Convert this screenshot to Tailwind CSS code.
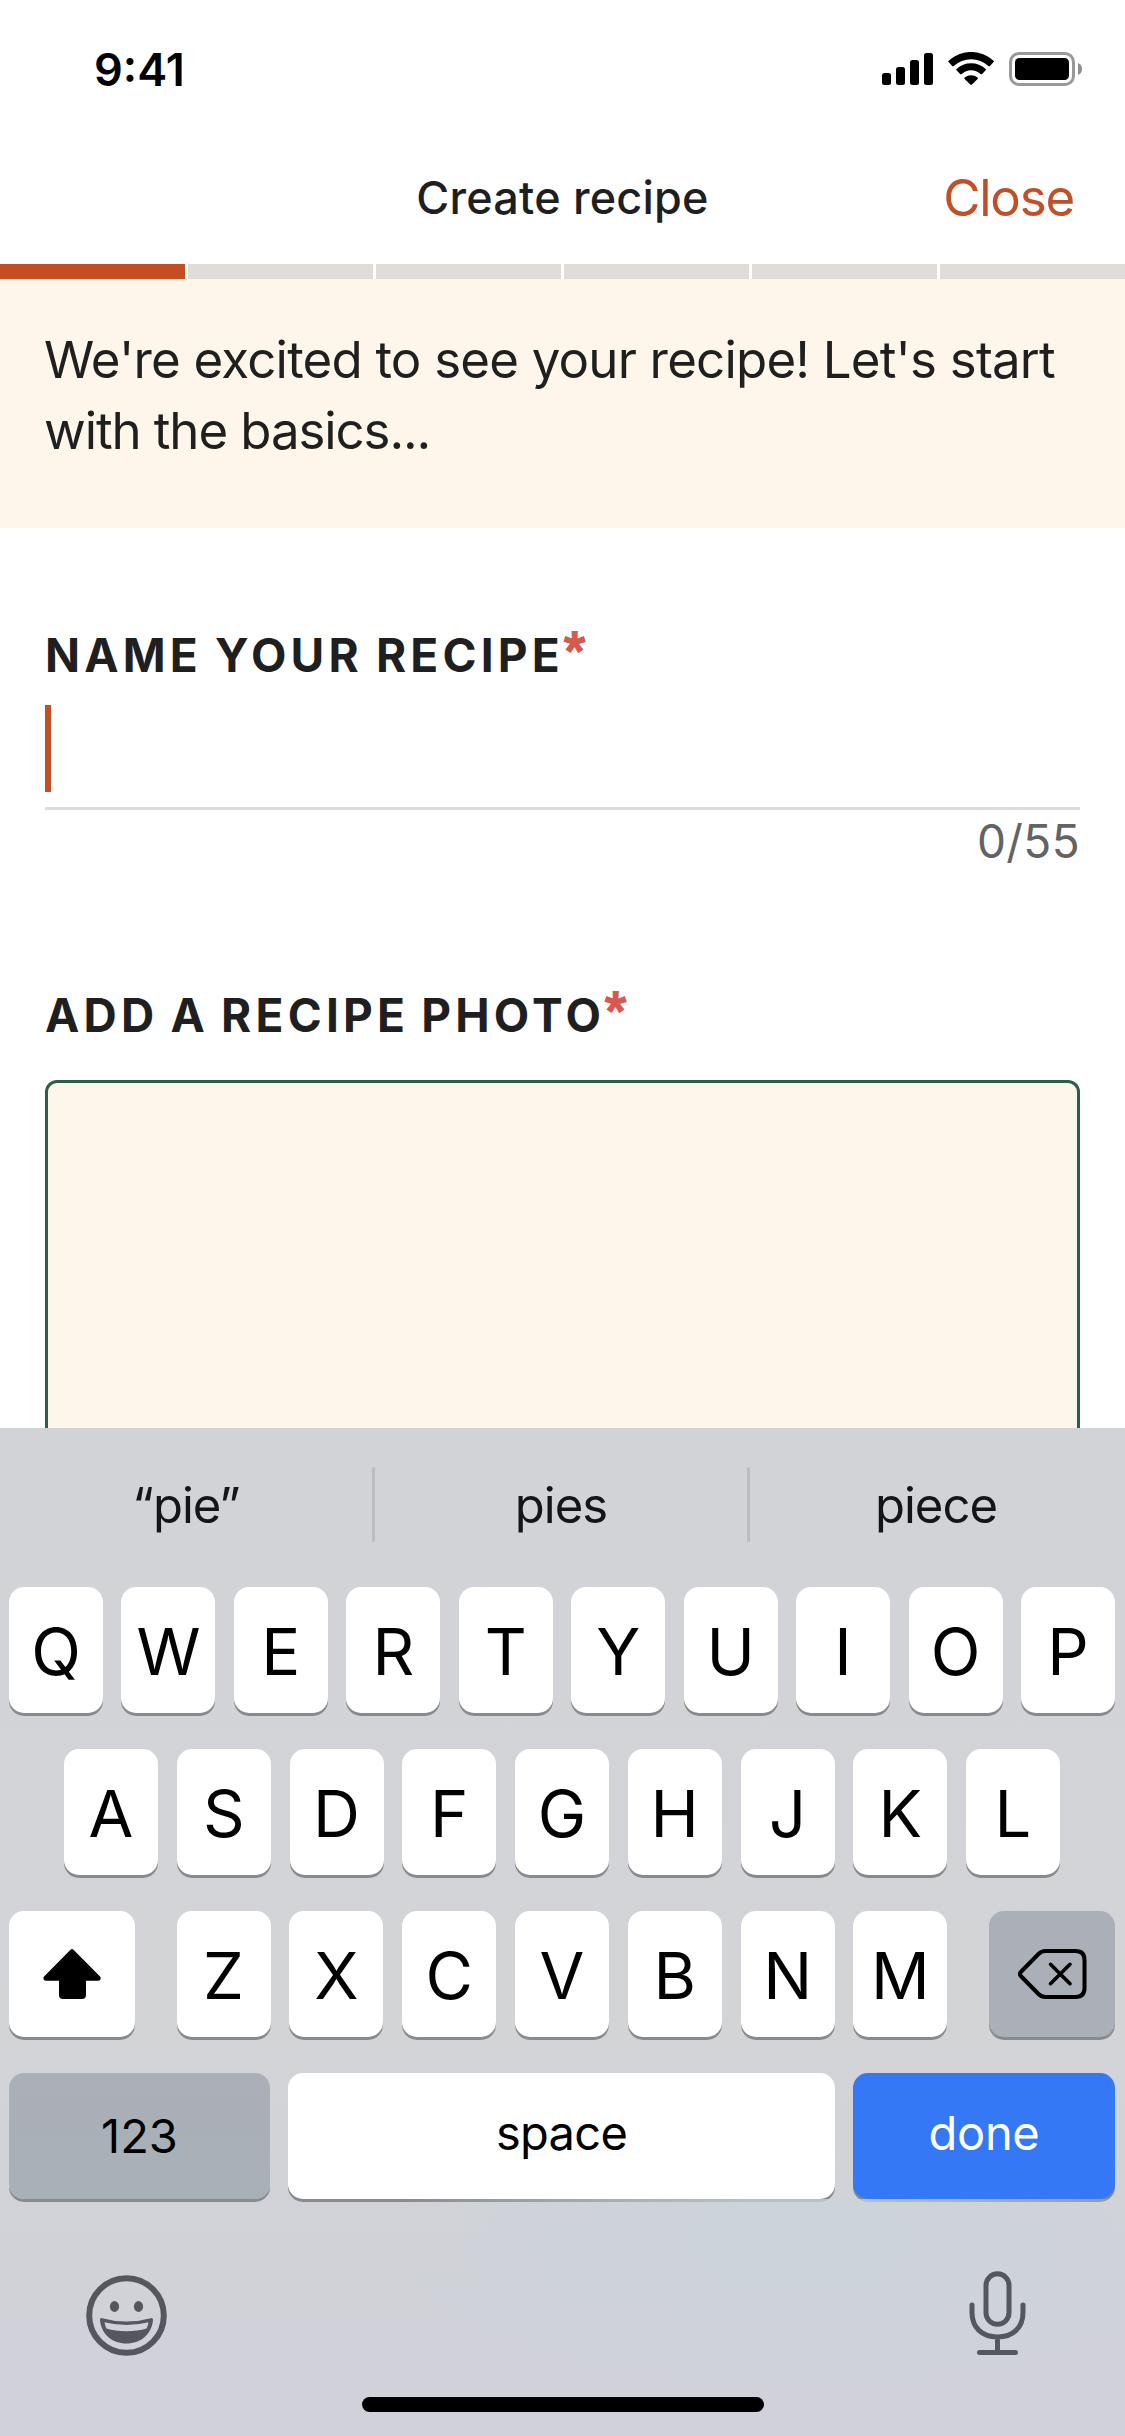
<!DOCTYPE html>
<html lang="en">
<head>
<meta charset="utf-8">
<title>Create recipe</title>
<script src="https://cdn.jsdelivr.net/npm/@tailwindcss/browser@4"></script>
</head>
<body class="bg-white">
<div class="flex h-[2436px] w-[1125px] flex-col overflow-hidden bg-white font-['Inter',sans-serif] text-[#1f1f1f]">
  <!-- Status bar -->
  <div class="flex h-[138px] shrink-0 items-center justify-between pr-[43px] pl-[94px]">
    <span class="text-[45px] leading-none font-semibold text-black">9:41</span>
    <svg class="h-[34px] w-[200px]" viewBox="882 52 200 34">
      <rect x="882" y="73" width="9" height="12" rx="2.5"/><rect x="896" y="67" width="9" height="18" rx="2.5"/><rect x="910" y="60" width="9" height="25" rx="2.5"/><rect x="924" y="53" width="9" height="32" rx="2.5"/>
      <path d="M948.600 60.800a33 33 0 0 1 45 0q.6.7 0 1.300l-3.600 3.800q-.8.7-1.600 0a25.500 25.500 0 0 0-34.600 0q-.8.7-1.600 0l-3.600-3.800q-.6-.6 0-1.300z"/>
      <path d="M956.500 69a21.500 21.500 0 0 1 29.200 0q.6.7 0 1.300l-3.600 3.700q-.8.7-1.600 0a13.500 13.500 0 0 0-18.800 0q-.8.7-1.600 0l-3.600-3.700q-.6-.6 0-1.300z"/>
      <path d="M964.600 77.500a10.500 10.500 0 0 1 13 0q.7.7 0 1.400l-5.700 5.700q-.8.7-1.600 0l-5.700-5.700q-.7-.7 0-1.400z"/>
      <rect x="1010.500" y="53.500" width="63" height="31" rx="8.500" fill="none" stroke="#999" stroke-width="3"/>
      <rect x="1015" y="58" width="54" height="22" rx="4.500"/>
      <path d="M1078 63q4 1.500 4 6t-4 6z" fill="#8e8e8e"/>
    </svg>
  </div>
  <!-- Navigation bar -->
  <div class="grid h-[126px] shrink-0 grid-cols-3 items-start pt-[30px] pr-[51px] pl-[51px]">
    <span></span>
    <h1 class="justify-self-center text-[45px] leading-[60px] font-medium tracking-[0.2px] whitespace-nowrap">Create recipe</h1>
    <span class="justify-self-end text-[51px] leading-[60px] tracking-[-1.2px] text-[#c14f27]">Close</span>
  </div>
  <!-- Step progress -->
  <div class="flex h-[15px] shrink-0 gap-[3px]">
    <div class="flex-1 bg-[#c44d24]"></div><div class="flex-1 bg-[#e0ddd8]"></div><div class="flex-1 bg-[#e0ddd8]"></div><div class="flex-1 bg-[#e0ddd8]"></div><div class="flex-1 bg-[#e0ddd8]"></div><div class="flex-1 bg-[#e0ddd8]"></div>
  </div>
  <p class="h-[249px] shrink-0 bg-[#fef6ea] pt-[45px] pl-[44px] text-[51px] leading-[71px] tracking-[-0.8px] whitespace-nowrap">We're excited to see your recipe! Let's start<br><span class="tracking-[-1.1px]">with the basics...</span></p>
  <!-- Form -->
  <div class="flex h-[900px] shrink-0 flex-col overflow-hidden px-[45px] pt-[97px]">
    <h2 class="flex h-[60px] shrink-0 text-[46px] leading-[60px] font-bold tracking-[4.2px] whitespace-nowrap [word-spacing:-2px]">NAME YOUR RECIPE<span class="-mt-1.5 font-['Roboto'] text-[#d5594f] [-webkit-text-stroke:1.8px_#d5594f]">*</span></h2>
    <div class="mt-5 h-[105px] shrink-0 border-b-[3px] border-[#dcdcdc]"><div class="h-[87px] w-[6px] bg-[#c14f27]"></div></div>
    <div class="flex h-[64px] shrink-0 justify-end text-[46px] leading-[62px] tracking-[0.4px] text-[#636363]">0/55</div>
    <h2 class="mt-[111px] flex h-[60px] shrink-0 text-[46px] leading-[60px] font-bold tracking-[4.2px] whitespace-nowrap [word-spacing:-3px]">ADD A RECIPE PHOTO<span class="-mt-1.5 font-['Roboto'] text-[#d5594f] [-webkit-text-stroke:1.8px_#d5594f]">*</span></h2>
    <div class="mt-[35px] h-[600px] shrink-0 rounded-[12px] border-[3px] border-[#2f5d4b] bg-[#fef6ea]"></div>
  </div>
  <!-- Keyboard -->
  <div class="flex flex-1 flex-col bg-linear-to-b from-[#d1d3d6] via-[#d2d4d6] via-60% to-[#d0d1da] text-black">
    <div class="flex h-[159px] shrink-0 items-center pr-[3px] text-[49px] tracking-[-1px] text-[#141518]">
      <span class="flex-1 pb-1 text-center">“pie”</span>
      <span class="h-[75px] w-[3px] translate-y-[-3px] rounded-full bg-[#bcbdc2]"></span>
      <span class="flex-1 pb-1 text-center">pies</span>
      <span class="h-[75px] w-[3px] translate-y-[-3px] rounded-full bg-[#bcbdc2]"></span>
      <span class="flex-1 pb-1 text-center">piece</span>
    </div>
    <div class="flex flex-col gap-9 pr-[10px] pl-[9px] text-[65px] leading-none [&_.key]:flex [&_.key]:h-[126px] [&_.key]:items-center [&_.key]:justify-center [&_.key]:rounded-[15px] [&_.key]:shadow-[0_3px_0_#898a8d]">
      <div class="flex justify-between [&_.key]:w-[94px] [&_.key]:bg-white [&_.key]:pt-[3px]">
        <div class="key">Q</div><div class="key">W</div><div class="key">E</div><div class="key">R</div><div class="key">T</div><div class="key">Y</div><div class="key">U</div><div class="key">I</div><div class="key">O</div><div class="key">P</div>
      </div>
      <div class="flex justify-between px-[55px] [&_.key]:w-[94px] [&_.key]:bg-white [&_.key]:pt-[3px]">
        <div class="key">A</div><div class="key">S</div><div class="key">D</div><div class="key">F</div><div class="key">G</div><div class="key">H</div><div class="key">J</div><div class="key">K</div><div class="key">L</div>
      </div>
      <div class="flex justify-between">
        <div class="key w-[126px] bg-white">
          <svg class="h-[50px] w-[58px]" viewBox="0 0 58 50"><path d="M27.500.8q1.500-1.400 3 0L56.800 27.200q1.200 1.300.8 2.800-.5 1.700-2.500 1.700H43V46q0 4-4 4H20q-4 0-4-4V31.700H3q-2 0-2.500-1.700-.4-1.500.8-2.800z"/></svg>
        </div>
        <div class="flex w-[771px] justify-between [&_.key]:w-[94px] [&_.key]:bg-white [&_.key]:pt-[3px]">
          <div class="key">Z</div><div class="key">X</div><div class="key">C</div><div class="key">V</div><div class="key">B</div><div class="key">N</div><div class="key">M</div>
        </div>
        <div class="key w-[126px] bg-[#abafb7]">
          <svg class="h-[50px] w-[69px]" viewBox="0 0 69 50" fill="none" stroke="#000" stroke-linecap="round" stroke-linejoin="round"><path stroke-width="4" d="M2.800 23 20.500 5Q23.500 2 27.500 2H57.500Q66.500 2 66.500 11V39Q66.500 48 57.500 48H27.500Q23.500 48 20.500 45L2.800 27Q1 25 2.800 23z"/><path stroke-width="3.600" d="M32.500 15.300 52 34.700M52 15.300 32.500 34.700"/></svg>
        </div>
      </div>
      <div class="flex justify-between text-[47px]">
        <div class="key w-[261px] bg-linear-to-b from-[#abafb7] to-[#a8b0b8] pb-px">123</div>
        <div class="key w-[547px] bg-white pb-2 tracking-[-0.7px]">space</div>
        <div class="key w-[262px] bg-[#3478f6] pb-2 tracking-[-0.3px] text-white">done</div>
      </div>
    </div>
    <div class="flex flex-1 items-start justify-between bg-[radial-gradient(ellipse_420px_150px_at_800px_40px,#cbd3db,transparent)] pt-[72px] pr-[99px] pl-[86px]">
      <svg class="mt-[4px] h-[81px] w-[81px]" viewBox="0 0 81 81" fill="#54575d"><circle cx="40.500" cy="40.500" r="37.300" fill="none" stroke="#54575d" stroke-width="6"/><ellipse cx="28.500" cy="31.500" rx="4.600" ry="5.400"/><ellipse cx="52.500" cy="31.500" rx="4.600" ry="5.400"/><path fill-rule="evenodd" d="M16.300 43.200Q40.500 50 64.700 43.200 67.300 42.700 67 45.500C65.500 59.500 54.500 68.500 40.500 68.500S15.500 59.500 14 45.500Q13.700 42.700 16.300 43.200zM18.500 47.200Q19 50.500 20.500 53.600 29 56.200 40.500 56.200T60.500 53.600Q62 50.500 62.500 47.200 40.500 52.800 18.500 47.200z"/></svg>
      <svg class="h-[85px] w-[57px]" viewBox="0 0 57 85" fill="none" stroke="#54575d" stroke-width="5" stroke-linecap="round"><rect x="17" y="2.800" width="23" height="50.500" rx="11.500"/><path d="M3 34V41.500C3 56.500 13 66 28.500 66S54 56.500 54 41.500V34M28.500 66V81M10.500 81.500H46.500"/></svg>
    </div>
    <div class="mx-auto mb-6 h-[15px] w-[402px] rounded-full bg-black"></div>
  </div>
</div>
</body>
</html>
